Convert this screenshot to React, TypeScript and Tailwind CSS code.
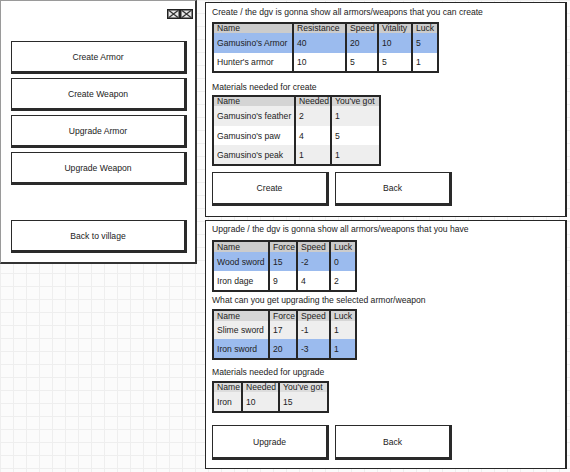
import React from "react";

type Row = { cells: string[]; bg: string };

function Table({
  cols,
  header,
  rows,
  headerBg,
  headerH,
  rowH,
}: {
  cols: number[];
  header: string[];
  rows: Row[];
  headerBg: string;
  headerH: number;
  rowH: number[];
}) {
  return (
    <div className="border-2 border-[#262626] w-fit flex flex-col">
      <div className="flex leading-none" style={{ height: headerH, background: headerBg }}>
        {header.map((h, i) => (
          <div
            key={i}
            className={`flex items-center pl-[3px] whitespace-nowrap ${i > 0 ? "border-l-2 border-[#262626]" : ""}`}
            style={{ width: cols[i] }}
          >
            {h}
          </div>
        ))}
      </div>
      {rows.map((r, ri) => (
        <div key={ri} className="flex" style={{ height: rowH[ri], background: r.bg }}>
          {r.cells.map((c, i) => (
            <div
              key={i}
              className={`flex items-center pl-[3px] whitespace-nowrap ${i > 0 ? "border-l-2 border-[#262626]" : ""}`}
              style={{ width: cols[i] }}
            >
              {c}
            </div>
          ))}
        </div>
      ))}
    </div>
  );
}

function SketchButton({ label, className = "" }: { label: string; className?: string }) {
  return (
    <div
      className={`flex items-center justify-center bg-white border border-[#2a2a2a] border-r-[3px] border-b-[3px] ${className}`}
    >
      {label}
    </div>
  );
}

function CloseBox() {
  return (
    <svg width="13" height="10" viewBox="0 0 13 10" className="block">
      <rect x="0.75" y="0.75" width="11.5" height="8.5" fill="#e8e8e8" stroke="#222" strokeWidth="1.5" />
      <path d="M2 1.5 L11 8.5 M11 1.5 L2 8.5" stroke="#333" strokeWidth="1.3" />
    </svg>
  );
}

const BLUE = "#9bbbee";
const LIGHT = "#eeeeee";

export default function App() {
  return (
    <div
      className="w-[570px] h-[472px] overflow-hidden relative flex items-start text-[8.6px] leading-[10px] text-[#222] bg-[#fbfbfb] bg-[linear-gradient(to_right,#eeeeee_1px,transparent_1px),linear-gradient(to_bottom,#eeeeee_1px,transparent_1px)] bg-[size:13px_13px]"
      style={{ fontFamily: '"Liberation Sans", Arial, sans-serif' }}
    >
      {/* Left panel */}
      <div className="w-[197px] h-[264px] bg-white border-t border-l border-[#9a9a9a] border-r-2 border-r-[#333] border-b-2 border-b-[#333] flex flex-col">
        <div className="flex justify-end pr-[2px] pt-[8px] gap-0">
          <CloseBox />
          <CloseBox />
        </div>
        <div className="flex flex-col gap-[4px] pl-[10px] mt-[22px]">
          <SketchButton label="Create Armor" className="w-[176px] h-[33px]" />
          <SketchButton label="Create Weapon" className="w-[176px] h-[33px]" />
          <SketchButton label="Upgrade Armor" className="w-[176px] h-[33px]" />
          <SketchButton label="Upgrade Weapon" className="w-[176px] h-[33px]" />
          <SketchButton label="Back to village" className="w-[176px] h-[33px] mt-[31px]" />
        </div>
      </div>

      {/* Right column */}
      <div className="ml-[8px] pt-[2px] flex flex-col gap-[3px]">
        {/* Create panel */}
        <div className="w-[362px] h-[215px] bg-white border-[1.5px] border-[#262626] border-r-[2.5px] flex flex-col pl-[6px] pt-[4px]">
          <div className="h-[10px]">Create / the dgv is gonna show all armors/weapons that you can create</div>
          <div className="mt-[5px]">
            <Table
              cols={[78, 53, 32, 34, 26]}
              header={["Name", "Resistance", "Speed", "Vitality", "Luck"]}
              headerBg="#cccccc"
              headerH={9}
              rowH={[20, 18]}
              rows={[
                { cells: ["Gamusino's Armor", "40", "20", "10", "5"], bg: BLUE },
                { cells: ["Hunter's armor", "10", "5", "5", "1"], bg: "#ffffff" },
              ]}
            />
          </div>
          <div className="mt-[9px] h-[10px]">Materials needed for create</div>
          <div className="mt-[3px]">
            <Table
              cols={[80, 36, 49]}
              header={["Name", "Needed", "You've got"]}
              headerBg="#d4d4d4"
              headerH={9}
              rowH={[20, 19, 19]}
              rows={[
                { cells: ["Gamusino's feather", "2", "1"], bg: LIGHT },
                { cells: ["Gamusino's paw", "4", "5"], bg: "#ffffff" },
                { cells: ["Gamusino's peak", "1", "1"], bg: LIGHT },
              ]}
            />
          </div>
          <div className="flex gap-[6px] mt-[6px]">
            <SketchButton label="Create" className="w-[117px] h-[34px]" />
            <SketchButton label="Back" className="w-[117px] h-[34px]" />
          </div>
        </div>

        {/* Upgrade panel */}
        <div className="w-[362px] h-[249px] bg-white border-[1.5px] border-[#262626] border-r-[2.5px] flex flex-col pl-[6px] pt-[3px]">
          <div className="h-[10px]">Upgrade / the dgv is gonna show all armors/weapons that you have</div>
          <div className="mt-[6px]">
            <Table
              cols={[54, 28, 33, 26]}
              header={["Name", "Force", "Speed", "Luck"]}
              headerBg="#cccccc"
              headerH={10}
              rowH={[19, 19]}
              rows={[
                { cells: ["Wood sword", "15", "-2", "0"], bg: BLUE },
                { cells: ["Iron dage", "9", "4", "2"], bg: "#ffffff" },
              ]}
            />
          </div>
          <div className="mt-[3px] h-[10px]">What can you get upgrading the selected armor/weapon</div>
          <div className="mt-[4px]">
            <Table
              cols={[54, 28, 33, 26]}
              header={["Name", "Force", "Speed", "Luck"]}
              headerBg="#d6d6d6"
              headerH={10}
              rowH={[18, 19]}
              rows={[
                { cells: ["Slime sword", "17", "-1", "1"], bg: LIGHT },
                { cells: ["Iron sword", "20", "-3", "1"], bg: BLUE },
              ]}
            />
          </div>
          <div className="mt-[7px] h-[10px]">Materials needed for upgrade</div>
          <div className="mt-[4px]">
            <Table
              cols={[27, 37, 49]}
              header={["Name", "Needed", "You've got"]}
              headerBg="#dddddd"
              headerH={9}
              rowH={[19]}
              rows={[{ cells: ["Iron", "10", "15"], bg: LIGHT }]}
            />
          </div>
          <div className="flex gap-[6px] mt-[12px]">
            <SketchButton label="Upgrade" className="w-[117px] h-[35px]" />
            <SketchButton label="Back" className="w-[117px] h-[35px]" />
          </div>
        </div>
      </div>
    </div>
  );
}
